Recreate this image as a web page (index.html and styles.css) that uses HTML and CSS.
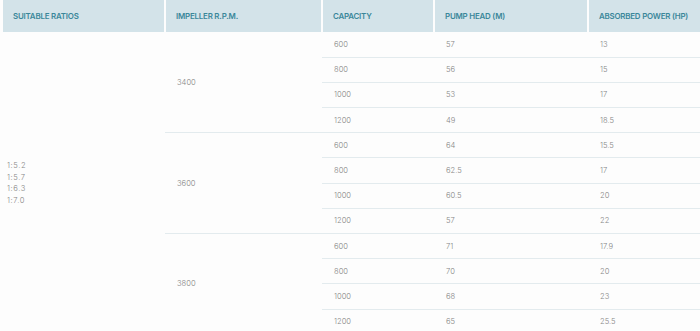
FILE: index.html
```html
<!DOCTYPE html>
<html>
<head>
<meta charset="utf-8">
<link rel="stylesheet" href="styles.css">
</head>
<body>
<table class="spec">
  <colgroup>
    <col class="c1"><col class="c2"><col class="c3"><col class="c4"><col class="c5">
  </colgroup>
  <thead>
    <tr>
      <th>SUITABLE RATIOS</th>
      <th>IMPELLER R.P.M.</th>
      <th>CAPACITY</th>
      <th>PUMP HEAD (M)</th>
      <th>ABSORBED POWER (HP)</th>
    </tr>
  </thead>
  <tbody>
    <tr>
      <td rowspan="12" class="ratios">1:5.2<br>1:5.7<br>1:6.3<br>1:7.0</td>
      <td rowspan="4" class="rpm">3400</td>
      <td>600</td><td>57</td><td>13</td>
    </tr>
    <tr><td>800</td><td>56</td><td>15</td></tr>
    <tr><td>1000</td><td>53</td><td>17</td></tr>
    <tr><td>1200</td><td>49</td><td>18.5</td></tr>
    <tr>
      <td rowspan="4" class="rpm">3600</td>
      <td>600</td><td>64</td><td>15.5</td>
    </tr>
    <tr><td>800</td><td>62.5</td><td>17</td></tr>
    <tr><td>1000</td><td>60.5</td><td>20</td></tr>
    <tr><td>1200</td><td>57</td><td>22</td></tr>
    <tr>
      <td rowspan="4" class="rpm">3800</td>
      <td>600</td><td>71</td><td>17.9</td>
    </tr>
    <tr><td>800</td><td>70</td><td>20</td></tr>
    <tr><td>1000</td><td>68</td><td>23</td></tr>
    <tr><td>1200</td><td>65</td><td>25.5</td></tr>
  </tbody>
</table>
</body>
</html>
```
FILE: styles.css
```css
html, body {
  margin: 0;
  padding: 0;
  background: #fdfdfd;
  overflow: hidden;
}
body {
  padding-left: 3px;
  font-family: Inter, "Noto Sans", sans-serif;
}
.spec {
  border-collapse: collapse;
  table-layout: fixed;
  width: 720px;
}
.c1 { width: 162px; }
.c2 { width: 157px; }
.c3 { width: 112px; }
.c4 { width: 154px; }
.c5 { width: 135px; }
.spec th {
  background: #d3e3e9;
  color: #3a879a;
  font-size: 7.9px;
  font-weight: 600;
  letter-spacing: -0.2px;
  text-align: left;
  height: 32px;
  padding: 0 0 0 10px;
  border-left: 2px solid #fdfdfd;
  box-sizing: border-box;
}
.spec th:first-child {
  border-left: none;
}
.spec td {
  color: #858585;
  font-size: 7.6px;
  font-weight: 300;
  text-align: left;
  height: 25.2px;
  padding: 0 0 0 12px;
  border-bottom: 1px solid #e3ebee;
  box-sizing: border-box;
}
.spec td.ratios {
  border-bottom: none;
  line-height: 11.5px;
  padding-left: 4px;
  letter-spacing: 0.6px;
}
.spec td.rpm {
  padding-left: 12px;
}
```
